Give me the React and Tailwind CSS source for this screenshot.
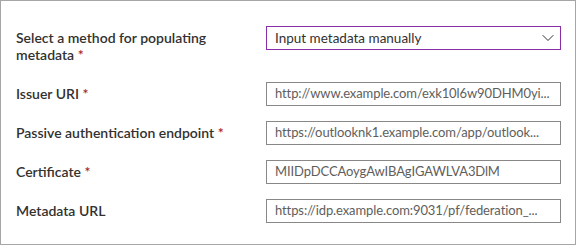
import { ChevronDown } from 'lucide-react';

const fields = [
  { label: 'Issuer URI', required: true, value: 'http://www.example.com/exk10l6w90DHM0yi...' },
  { label: 'Passive authentication endpoint', required: true, value: 'https://outlooknk1.example.com/app/outlook...' },
  { label: 'Certificate', required: true, value: 'MIIDpDCCAoygAwIBAgIGAWLVA3DlM' },
  { label: 'Metadata URL', required: false, value: 'https://idp.example.com:9031/pf/federation_...' },
];

function Label({ lines, required, className = '' }) {
  return (
    <div className={`w-[250px] shrink-0 pt-[3px] pr-4 leading-[17px] text-[14px] text-[#323130] font-semibold ${className}`}>
      {lines.map((line, i) => (
        <div key={i}>
          {line}
          {required && i === lines.length - 1 && <span className="text-[#a4262c]"> *</span>}
        </div>
      ))}
    </div>
  );
}

export default function App() {
  return (
    <div
      className="w-[576px] h-[245px] bg-white border border-[#a6a6a6] pl-[15px] pr-[14px] pt-[25px]"
      style={{ fontFamily: '"Segoe UI", Lato, sans-serif' }}
    >
      <div className="flex flex-col gap-[15px]">
        <div className="flex items-start">
          <Label lines={['Select a method for populating', 'metadata']} required className="pb-[4px]" />
          <div className="flex-1 min-w-0 h-[24px] border border-[#8a2da5] flex items-center justify-between pl-2 pr-[2px] text-[13.5px] text-[#323130]">
            <span>Input metadata manually</span>
            <ChevronDown size={20} strokeWidth={1.2} className="text-[#323130]" />
          </div>
        </div>
        {fields.map((f) => (
          <div key={f.label} className="flex items-start">
            <Label lines={[f.label]} required={f.required} />
            <div className="flex-1 min-w-0 h-[24px] border border-[#8a8886] flex items-center pl-2 pr-1 text-[13px] tracking-[-0.1px] text-[#605e5c]">
              <span className="whitespace-nowrap overflow-hidden">{f.value}</span>
            </div>
          </div>
        ))}
      </div>
    </div>
  );
}
